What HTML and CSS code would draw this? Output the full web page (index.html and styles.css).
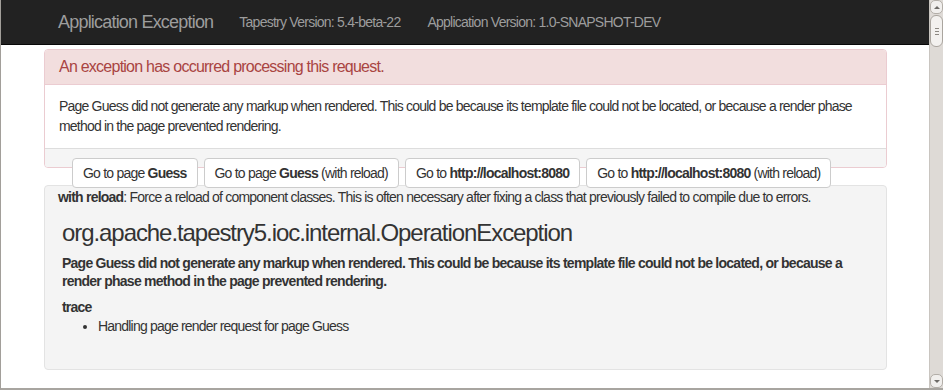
FILE: index.html
```html
<!DOCTYPE html>
<html lang="en">
<head>
  <meta charset="UTF-8">
  <title>Application Exception</title>
  <link rel="stylesheet" href="styles.css">
</head>
<body>
  <div class="window">
    <div class="viewport">
      <nav class="navbar">
        <span class="brand">Application Exception</span>
        <span class="nav-text">Tapestry Version: 5.4-beta-22</span>
        <span class="nav-text">Application Version: 1.0-SNAPSHOT-DEV</span>
      </nav>

      <div class="page">
        <div class="panel">
          <div class="panel-heading">An exception has occurred processing this request.</div>
          <div class="panel-body">Page Guess did not generate any markup when rendered. This could be because its template file could not be located, or because a render phase method in the page prevented rendering.</div>
          <div class="panel-footer"></div>
        </div>

        <div class="devtools">
          <button class="btn">Go to page <b>Guess</b></button>
          <button class="btn">Go to page <b>Guess</b> (with reload)</button>
          <button class="btn">Go to <b>http://localhost:8080</b></button>
          <button class="btn">Go to <b>http://localhost:8080</b> (with reload)</button>
        </div>

        <div class="well">
          <p class="reload-note"><strong>with reload</strong>: Force a reload of component classes. This is often necessary after fixing a class that previously failed to compile due to errors.</p>
          <div class="exception">
            <h3>org.apache.tapestry5.ioc.internal.OperationException</h3>
            <p class="message">Page Guess did not generate any markup when rendered. This could be because its template file could not be located, or because a render phase method in the page prevented rendering.</p>
            <dl>
              <dt>trace</dt>
              <dd>
                <ul>
                  <li>Handling page render request for page Guess</li>
                </ul>
              </dd>
            </dl>
          </div>
        </div>

        <div class="well next"></div>
      </div>
    </div>

    <div class="scrollbar">
      <div class="sb-btn sb-up"></div>
      <div class="sb-track">
        <div class="sb-thumb"><span></span><span></span><span></span></div>
      </div>
      <div class="sb-btn sb-down"></div>
    </div>
  </div>
</body>
</html>
```

FILE: styles.css
```css
body {
  margin: 0;
  font-family: "Liberation Sans", Arial, sans-serif;
  font-size: 14px;
  color: #333;
  overflow: hidden;
}
.window {
  display: flex;
  height: 390px;
  box-sizing: border-box;
  border-left: 1px solid #a29f9a;
  border-bottom: 2px solid #a8a5a0;
  background: #fff;
}
.viewport {
  flex: 1;
  overflow: hidden;
}

/* top bar */
.navbar {
  display: flex;
  align-items: center;
  height: 44px;
  padding-left: 57px;
  background-color: #222;
  border-bottom: 1px solid #080808;
}
.brand {
  font-size: 18px;
  letter-spacing: -0.8px;
  color: #9d9d9d;
  margin-right: 26px;
}
.nav-text {
  font-size: 14px;
  letter-spacing: -0.75px;
  color: #9d9d9d;
  margin-right: 27px;
}

.page {
  padding: 4px 42px 0 43px;
}

/* red alert panel */
.panel {
  border: 1px solid #ebccd1;
  border-radius: 4px;
  overflow: hidden;
}
.panel-heading {
  height: 34px;
  line-height: 34px;
  padding: 0 14px;
  background-color: #f2dede;
  border-bottom: 1px solid #ebccd1;
  color: #a94442;
  font-size: 16px;
  letter-spacing: -0.76px;
}
.panel-body {
  padding: 12px 14px 12px;
  line-height: 19.5px;
  letter-spacing: -0.8px;
}
.panel-footer {
  height: 18px;
  background-color: #f5f5f5;
  border-top: 1px solid #ddd;
}

/* dev tool buttons */
.devtools {
  position: relative;
  z-index: 1;
  display: flex;
  gap: 6px;
  margin: -10px 0 -3px 28px;
}
.btn {
  height: 30px;
  padding: 0 10px;
  background-color: #fff;
  border: 1px solid #ccc;
  border-radius: 4px;
  font-family: inherit;
  font-size: 14px;
  letter-spacing: -0.78px;
  color: #333;
}

/* exception report */
.well {
  padding: 2px 13px 33px;
  background-color: #f4f4f4;
  border: 1px solid #e3e3e3;
  border-radius: 4px;
}
.well.next {
  margin-top: 18px;
  height: 20px;
  padding: 0;
}
.reload-note {
  margin: 0;
  line-height: 19px;
  letter-spacing: -0.78px;
}
.exception {
  padding-left: 4px;
}
.exception h3 {
  margin: 13px 0 0;
  font-size: 24px;
  font-weight: normal;
  line-height: 26px;
  letter-spacing: -1.07px;
}
.message {
  margin: 8px 0 0;
  font-weight: bold;
  line-height: 18px;
  letter-spacing: -0.75px;
}
.exception dl {
  margin: 8px 0 0;
  line-height: 19px;
  letter-spacing: -0.8px;
}
.exception dt {
  font-weight: bold;
}
.exception dd {
  margin: 0;
}
.exception ul {
  margin: 0;
  padding-left: 36px;
}

/* fake window scrollbar */
.scrollbar {
  width: 14px;
  display: flex;
  flex-direction: column;
  background: #dedad6;
  border-left: 1px solid #c9c5c0;
  box-sizing: border-box;
}
.sb-btn {
  height: 12px;
  display: flex;
  align-items: center;
  justify-content: center;
  background: #f1efed;
  border: 1px solid #b3aea8;
  border-radius: 5px;
}
.sb-up::before,
.sb-down::before {
  content: "";
  border-left: 3px solid transparent;
  border-right: 3px solid transparent;
}
.sb-up::before {
  border-bottom: 3px solid #6d6a66;
}
.sb-down::before {
  border-top: 3px solid #6d6a66;
}
.sb-track {
  flex: 1;
  padding: 1px 0 1px;
}
.sb-thumb {
  height: 30px;
  display: flex;
  flex-direction: column;
  align-items: center;
  justify-content: center;
  gap: 2px;
  background: #f3f1ef;
  border: 1px solid #aaa59f;
  border-radius: 6px;
}
.sb-thumb span {
  width: 4px;
  height: 1px;
  background: #8c8882;
}
```
